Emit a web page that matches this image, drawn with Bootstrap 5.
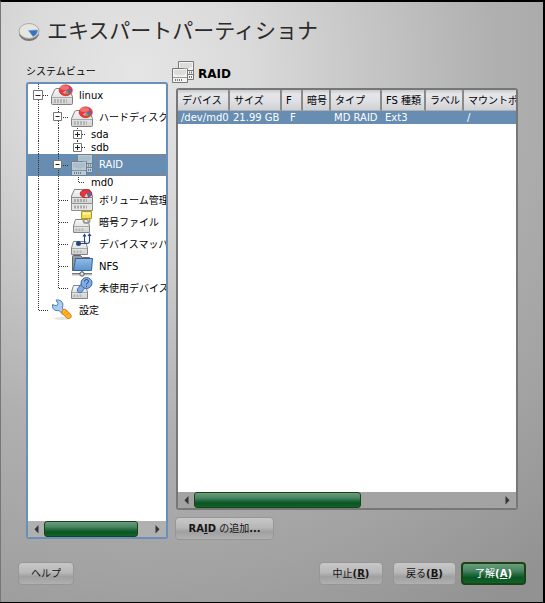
<!DOCTYPE html>
<html lang="ja">
<head>
<meta charset="utf-8">
<meta name="viewport" content="width=device-width, initial-scale=1">
<title>エキスパートパーティショナ</title>
<link rel="stylesheet" href="https://cdn.jsdelivr.net/npm/bootstrap@5.3.0/dist/css/bootstrap.min.css">
<style>
body{width:545px;height:603px;overflow:hidden;background:#000;font:10px/13px "DejaVu Sans","Noto Sans CJK JP",sans-serif;color:#000}
.win{width:543px;height:602px;border-top:2px solid #000;border-left:1px solid #777;
 background:radial-gradient(circle 640px at 135px 70px,#e5e5e5 0,#dadada 18%,#c4c4c4 38%,#b0b0b0 56%,#a3a3a3 78%,#929292 100%)}
.app-title{font-size:21px;line-height:30px;color:#2b2b2b;padding:14px 0 0 17px;height:58px;gap:7px}
.app-title svg{margin-top:6px}
.side{width:142px;margin-left:25px}
.side-label{height:22px;padding-top:5px}
.tree{width:142px;height:457px;border:2px solid #6890b8;border-radius:3px;background:#fff}
.trow{height:22px;white-space:nowrap;flex:none}
.trow.short{height:13px}
.trow svg{flex:none}
.trow .txt{margin-left:6px}
.trow.sel{background:#678db2;color:#fff}
.trow.sel .txt{border:1px dotted #a07a60;border-right:0;height:22px;line-height:20px;flex:1;margin-left:3px;padding-left:2px}
.ln{fill:none;stroke:#333;stroke-dasharray:1 1}
.box{fill:#fff;stroke:#777}
.pm{stroke:#222;fill:none}
.sbar{height:16px;background:#b0b0b0;flex:none}
.sbar .arrow{width:16px;height:16px}
.thumb{height:16px;border:1px solid #1d4216;border-radius:3px;background:linear-gradient(#6b9d7d,#478561 35%,#1e6537 58%,#0b5423 72%,#0d6528)}
.main{width:343px;margin-left:7px}
.rhead{height:28px;font-size:12px;font-weight:700;gap:4px;margin-left:-3px}
.panel{width:342px;height:422px;border:2px solid #777;border-radius:3px;background:#fff;margin-left:1px}
.panel .sbar{background:#a3a3a3}
.grid{display:grid;grid-template-columns:52px 52px 21px 28px 51px 44px 38px 52px;width:338px;overflow:hidden;white-space:nowrap}
.grid>div{overflow:hidden}
.hd{height:21px;line-height:21px;padding-left:4px;background:linear-gradient(#c9cacd,#e5e6ea 20%,#e0e1e5 55%,#cfd0d4);border-right:2px solid #8a8a86;border-bottom:1px solid #b0b0ae}
.hd:nth-child(8){border-right:0}
.td{height:13px;line-height:13px;background:#678db2;color:#fff;padding-left:3px}
.btn.yb{font-size:10px;line-height:13px;padding:0;height:23px;border:1px solid #969696;border-radius:4px;color:#151515;background:linear-gradient(#c8c8c8,#b8b8b8 45%,#a0a0a0 65%,#b0b0b0)}
.btn.yb.ok{color:#fff;border:2px solid #1d4216;background:linear-gradient(#6b9d7d,#478561 35%,#1e6537 58%,#0b5423 72%,#0d6528)}
.foot{padding:0 17px;margin-bottom:17px}
.add{margin-top:7px;margin-left:0}
</style>
<script src="https://cdn.jsdelivr.net/npm/bootstrap@5.3.0/dist/js/bootstrap.bundle.min.js"></script>
</head>
<body>
<svg width="0" height="0" class="position-absolute">
<defs>
<linearGradient id="gm" x2="0" y2="1"><stop stop-color="#f8f8f8"/><stop offset="1" stop-color="#d2d2d2"/></linearGradient>
<linearGradient id="gf" x2="0" y2="1"><stop stop-color="#93bce5"/><stop offset="1" stop-color="#5c93cc"/></linearGradient>
<symbol id="drive" viewBox="0 0 22 22"><path d="M3.500 6Q4 4.500 6 4.500H16Q18 4.500 18.500 6L21.500 12.500V19.500Q21.500 20.500 20.500 20.500H1.500Q.5 20.500.5 19.500V12.500Z" fill="url(#gm)" stroke="#808080"/><path d="M1 13.500H21" stroke="#aaa"/><path d="M3 15h13v4H3z" fill="#b4b4b4"/><path d="M5.500 15v4M8.500 15v4M11.500 15v4M14.500 15v4" stroke="#ddd"/></symbol>
<symbol id="pie" viewBox="0 0 22 22"><ellipse cx="14.700" cy="6.300" rx="6.600" ry="5.400" fill="#e8393d" stroke="#cc3038" stroke-width=".8"/><ellipse cx="13.500" cy="3.800" rx="4.500" ry="2.200" fill="#f2706e"/><path d="M15.500 6L20 5Q20.500 8 17.800 9.300Z" fill="#4677b8"/><path d="M15.500 6L17.800 9.300Q16 10.500 14 10Z" fill="#8a9c4a"/><path d="M15.500 6L14 10L11.500 8.500Z" fill="#d9a0b8"/></symbol>
<symbol id="small" viewBox="0 0 22 22"><path d="M2.500 8.500H14.500L16.500 15V21.500H.5V15Z" fill="url(#gm)" stroke="#858585"/><path d="M1 15.500H16" stroke="#aaa"/><path d="M2.500 17.500h9v2.500h-9z" fill="#b4b4b4"/><path d="M5 17v3M8 17v3M11 17v3" stroke="#e5e5e5"/></symbol>
<symbol id="raid" viewBox="0 0 22 22"><g stroke="#777"><path d="M6.500.5H21.500V18.500H6.500Z" fill="#f3f3f1"/><path d="M6.500 9.500H21.500M6.500 13.500H21.500" fill="none"/><path d="M.5 7.500H15.500V21.500H.5Z" fill="#f3f3f1"/><path d="M1 16.500H15" fill="none" stroke="#999"/></g><path d="M8 2H20V6Q14 9 8 6ZM2 9H14V13Q8 16 2 13Z" fill="#dcddda"/><path d="M3 19H11M17 11.500H20M17 16H20" stroke="#777" stroke-dasharray="1 1" stroke-width="2"/></symbol>
</defs>
</svg>
<div class="win d-flex flex-column">
 <div class="app-title d-flex align-items-start">
  <svg width="22" height="20" viewBox="0 0 22 20"><ellipse cx="11" cy="11.500" rx="10" ry="7.500" fill="#777"/><ellipse cx="11" cy="9" rx="10" ry="7.500" fill="#e6e6e0" stroke="#aaa"/><path d="M10.500 8.500L19.500 8Q19.500 13 15 14.500Z" fill="#3b72bd" stroke="#6c9bd6" stroke-width=".6"/></svg>
  <span>エキスパートパーティショナ</span>
 </div>
 <div class="d-flex align-items-start">
  <div class="side">
   <div class="side-label">システムビュー</div>
   <div class="tree d-flex flex-column overflow-hidden">
    <div class="trow d-flex align-items-center"><svg width="23" height="22"><path class="ln" d="M10.500 0V22M15 11.500H20"/><path class="box" d="M5.500 6.500h9v9h-9z"/><path class="pm" d="M7.500 11.500h5"/></svg><svg width="22" height="22"><use href="#drive"/><use href="#pie"/></svg><span class="txt">linux</span></div>
    <div class="trow d-flex align-items-center"><svg width="43" height="22"><path class="ln" d="M10.500 0V22M30.500 1V22M35 11.500H40"/><path class="box" d="M25.500 6.500h8v8h-8z"/><path class="pm" d="M27.500 10.500h4"/></svg><svg width="22" height="22"><use href="#drive"/><use href="#pie"/></svg><span class="txt">ハードディスク</span></div>
    <div class="trow short d-flex align-items-center"><svg width="57" height="13"><path class="ln" d="M10.500 0V13M30.500 0V13M49.500 0V13M54 6.500H60"/><path class="box" d="M45.500 2.500h8v8h-8z"/><path class="pm" d="M47 6.500h5M49.500 4v5"/></svg><span class="txt">sda</span></div>
    <div class="trow short d-flex align-items-center"><svg width="57" height="13"><path class="ln" d="M10.500 0V13M30.500 0V13M49.500 0V6M54 6.500H60"/><path class="box" d="M45.500 2.500h8v8h-8z"/><path class="pm" d="M47 6.500h5M49.500 4v5"/></svg><span class="txt">sdb</span></div>
    <div class="trow sel d-flex align-items-center"><svg width="43" height="22"><path class="ln" d="M10.500 0V22M30.500 0V22M35 11.500H40"/><path class="box" d="M25.500 6.500h8v8h-8z"/><path class="pm" d="M27.500 10.500h4"/></svg><svg width="22" height="22"><use href="#raid" opacity=".6"/></svg><span class="txt">RAID</span></div>
    <div class="trow short d-flex align-items-center"><svg width="57" height="13"><path class="ln" d="M10.500 0V13M30.500 0V13M50.500 1V7M51 6.500H60"/></svg><span class="txt">md0</span></div>
    <div class="trow d-flex align-items-center"><svg width="43" height="22"><path class="ln" d="M10.500 0V22M30.500 0V22M31 11.500H40"/></svg><svg width="22" height="22"><path d="M3.500.5H18.500L21.500 7V14.500H.5V7Z" fill="url(#gm)" stroke="#808080"/><path d="M.5 8.500H21.500M.5 14.500H21.500V21.500H.5Z" fill="#e5e5e5" stroke="#909090"/><path d="M3 11.500H16M3 18H16" stroke="#aaa" stroke-width="3" stroke-dasharray="2 1"/><ellipse cx="15" cy="4.700" rx="5.800" ry="4" fill="#e0383c" stroke="#b82830"/><path d="M15.500 4.500L20.300 4Q20.500 7 17 8.200Z" fill="#3f72b8"/><path d="M15.500 4.500L17 8.200L13.500 8Z" fill="#ddd"/></svg><span class="txt">ボリューム管理</span></div>
    <div class="trow d-flex align-items-center"><svg width="43" height="22"><path class="ln" d="M10.500 0V22M30.500 0V22M31 11.500H40"/></svg><svg width="22" height="22"><use href="#small" x="2"/><path d="M12.500 7V9.500Q12.500 12 15.500 12T18.500 9.500V7" fill="none" stroke="#9a9d90" stroke-width="2"/><path d="M10.500.5H20.500V7.500H10.500Z" fill="#f5df4c" stroke="#b49a20"/><path d="M12 2.500h7" stroke="#fff9b8" stroke-width="2"/></svg><span class="txt">暗号ファイル</span></div>
    <div class="trow d-flex align-items-center"><svg width="43" height="22"><path class="ln" d="M10.500 0V22M30.500 0V22M31 11.500H40"/></svg><svg width="22" height="22"><use href="#small"/><path d="M7 10.500H16Q18.500 10.500 18.500 8V1.500M13.500 10V2M12 3.500L13.500 1.500L15 3.500M17 3L18.500 1L20 3" fill="none" stroke="#204a87" stroke-width="1.100"/><circle cx="7.500" cy="10.500" r="2.500" fill="#204a87"/></svg><span class="txt">デバイスマッパ</span></div>
    <div class="trow d-flex align-items-center"><svg width="43" height="22"><path class="ln" d="M10.500 0V22M30.500 0V22M31 11.500H40"/></svg><svg width="22" height="22"><path d="M1.500 16V1.500Q1.500.5 2.500.5H9.500L11.500 2.500H18.500V5" fill="#9a9c98" stroke="#666"/><path d="M4.500 3.500H21.500L20.500 15.500H2.500Z" fill="url(#gf)" stroke="#2f64a4"/><path d="M1 19.500H21" stroke="#bbb" stroke-width="2"/><path d="M1 18.500H21M11 16V19" stroke="#777"/><circle cx="11" cy="19" r="2.200" fill="#ddd" stroke="#555"/></svg><span class="txt">NFS</span></div>
    <div class="trow d-flex align-items-center"><svg width="43" height="22"><path class="ln" d="M10.500 0V22M30.500 0V12M31 11.500H40"/></svg><svg width="22" height="22"><use href="#small"/><path d="M12 9L9 13" stroke="#3969a6" stroke-width="6" stroke-linecap="round"/><path d="M12 9L9 13" stroke="#83ace0" stroke-width="4.500" stroke-linecap="round"/><circle cx="15.500" cy="6" r="5.500" fill="#83ace0" stroke="#3969a6"/><path d="M13.500 4.500Q13.500 2.500 15.500 2.500T17.500 4.500Q17.500 5.500 15.500 6.700V7.500M15.500 8.800V9.800" fill="none" stroke="#204a87"/></svg><span class="txt">未使用デバイス</span></div>
    <div class="trow d-flex align-items-center"><svg width="23" height="22"><path class="ln" d="M10.500 0V12M11 11.500H20"/></svg><svg width="22" height="22"><ellipse cx="11" cy="19.500" rx="8" ry="1.500" fill="#e3e3e3"/><path d="M5 1L7 4.500L5.500 7L1.500 5.500Q1 10.500 5 11.500Q7 12 8 11.500L12 15.500L14.500 12.500L11.300 9Q13 4 10 2Q8 .5 5 1Z" fill="#adcbed" stroke="#4b7db5"/><path d="M13.500 13L17.500 17" stroke="#dc7809" stroke-width="6" stroke-linecap="round"/><path d="M13.500 13L17.500 17" stroke="#ffb52e" stroke-width="4.500" stroke-linecap="round"/><path d="M13 14.500l3-3M15 16.500l3-3" stroke="#ee8f16"/></svg><span class="txt">設定</span></div>
    <div class="sbar d-flex mt-auto"><svg class="arrow" viewBox="0 0 16 16"><path d="M10.500 4V12.500L6.500 8.200Z" fill="#303636"/></svg><div class="thumb" style="width:94px"></div><svg class="arrow ms-auto" viewBox="0 0 16 16"><path d="M5.500 4V12.500L9.500 8.200Z" fill="#303636"/></svg></div>
   </div>
  </div>
  <div class="main">
   <div class="rhead d-flex align-items-start"><svg width="22" height="23" viewBox="0 0 22 23"><use href="#raid" y="1" width="22" height="22"/></svg><span class="pt-1 mt-1">RAID</span></div>
   <div class="panel d-flex flex-column overflow-hidden">
    <div class="grid">
     <div class="hd">デバイス</div><div class="hd">サイズ</div><div class="hd">F</div><div class="hd">暗号</div><div class="hd">タイプ</div><div class="hd">FS 種類</div><div class="hd">ラベル</div><div class="hd">マウントポ</div>
     <div class="td">/dev/md0</div><div class="td">21.99 GB</div><div class="td ps-2">F</div><div class="td"></div><div class="td">MD RAID</div><div class="td">Ext3</div><div class="td"></div><div class="td">/</div>
    </div>
    <div class="sbar d-flex mt-auto"><svg class="arrow" viewBox="0 0 16 16"><path d="M10.500 4V12.500L6.500 8.200Z" fill="#303636"/></svg><div class="thumb" style="width:167px"></div><svg class="arrow ms-auto" viewBox="0 0 16 16"><path d="M5.500 4V12.500L9.500 8.200Z" fill="#303636"/></svg></div>
   </div>
   <button class="btn yb add" style="width:99px"><b>RA<u>I</u>D</b> の追加<b>...</b></button>
  </div>
 </div>
 <div class="foot d-flex mt-auto">
  <button class="btn yb me-auto" style="width:56px">ヘルプ</button>
  <button class="btn yb" style="width:64px;margin-right:10px">中止<b>(<u>R</u>)</b></button>
  <button class="btn yb" style="width:63px;margin-right:5px">戻る<b>(<u>B</u>)</b></button>
  <button class="btn yb ok" style="width:65px">了解<b>(<u>A</u>)</b></button>
 </div>
</div>
</body>
</html>
